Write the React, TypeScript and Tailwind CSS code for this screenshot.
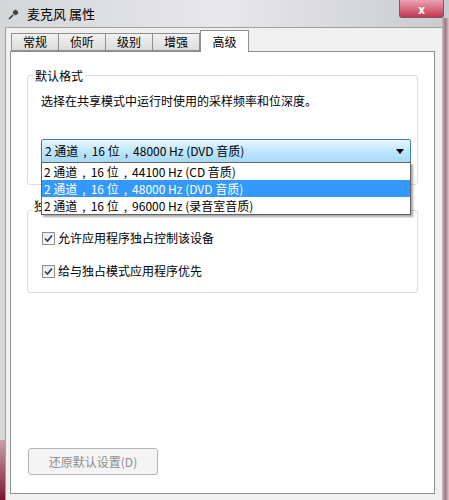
import React from "react";

const font = { fontFamily: '"Noto Sans CJK SC", "Noto Sans", sans-serif' };

function Tab({ label, active }: { label: string; active?: boolean }) {
  if (active) {
    return (
      <div className="relative z-10 -mb-px flex h-[22px] w-[49px] items-start justify-center border border-b-0 border-[#8e8f8f] bg-white pt-[2px] text-[12px] text-black">
        {label}
      </div>
    );
  }
  return (
    <div className="mt-[3px] flex h-[18px] items-center border border-r-0 border-[#8e8f8f] bg-gradient-to-b from-[#f2f2f2] to-[#dcdcdc] px-[11px] text-[12px] text-black">
      {label}
    </div>
  );
}

function Check({ label }: { label: string }) {
  return (
    <div className="flex items-center gap-[3px] text-[12px] text-black">
      <div className="flex h-[13px] w-[13px] items-center justify-center border border-[#8f8f8f] bg-gradient-to-br from-[#e8e8e8] to-white">
        <svg width="9" height="9" viewBox="0 0 9 9">
          <path d="M1 4.5 L3.5 7 L8 1.5" fill="none" stroke="#2a3a5c" strokeWidth="1.6" />
        </svg>
      </div>
      <span>{label}</span>
    </div>
  );
}

// renders "2 通道 , 16 位 , 48000 Hz (...)" with the wide comma spacing of the dialog
function Fmt({ text }: { text: string }) {
  const parts = text.split("，");
  return (
    <span>
      {parts.map((p, i) => (
        <React.Fragment key={i}>
          {i > 0 && <span className="px-[5px]">,</span>}
          {p}
        </React.Fragment>
      ))}
    </span>
  );
}

export default function App() {
  const options = [
    "2 通道，16 位，44100 Hz (CD 音质)",
    "2 通道，16 位，48000 Hz (DVD 音质)",
    "2 通道，16 位，96000 Hz (录音室音质)",
  ];
  return (
    <div
      className="relative h-[500px] w-[449px] overflow-hidden bg-gradient-to-r from-[#d4d6d8] via-[#e8e8ea] to-[#c9cbcf]"
      style={font}
    >
      <div className="absolute bottom-0 left-0 h-[60px] w-[5px] bg-gradient-to-b from-[#c8a0aa] to-[#7a1030]" />
      {/* title bar */}
      <div className="flex h-[27px] items-center gap-[6px] pl-[8px]">
        <svg width="13" height="12" viewBox="0 0 13 12">
          <path d="M1 11 L5 7" stroke="#333" strokeWidth="1.5" />
          <rect x="5" y="2" width="5" height="5" rx="2" fill="#444" transform="rotate(45 7.5 4.5)" />
        </svg>
        <span className="text-[13px] text-black">麦克风 属性</span>
      </div>
      <div className="absolute right-[5px] top-0 flex h-[18px] w-[45px] items-center justify-center rounded-b-[3px] border border-t-0 border-[#7a5a66] bg-gradient-to-b from-[#e9a2b4] to-[#c33355] text-[12px] font-bold text-white">
        x
      </div>
      <div className="absolute right-0 top-[18px] h-[482px] w-[7px] bg-gradient-to-r from-[#c9b6bb] via-[#9e7b86] to-[#d7c9cc]" />

      {/* client */}
      <div className="ml-[5px] h-[473px] w-[437px] border-l border-t border-[#a0a0a0] bg-[#f0f0f0] px-[4px] pt-[2px]">
        <div className="flex items-end pl-[1px]">
          <Tab label="常规" />
          <Tab label="侦听" />
          <Tab label="级别" />
          <div className="mt-[3px] flex h-[18px] items-center border border-[#8e8f8f] bg-gradient-to-b from-[#f2f2f2] to-[#dcdcdc] px-[11px] text-[12px] text-black">
            增强
          </div>
          <Tab label="高级" active />
        </div>
        <div className="flex h-[443px] w-[425px] flex-col border border-[#8e8f8f] bg-white px-[16px] pt-[23px]">
          {/* group 1 */}
          <div className="relative h-[110px] rounded-[3px] border border-[#dcdcdc] px-[13px] pt-[16px]">
            <span className="absolute -top-[9px] left-[5px] bg-white px-[2px] text-[12px] text-black">
              默认格式
            </span>
            <div className="text-[12px] text-black">选择在共享模式中运行时使用的采样频率和位深度。</div>
            <div className="relative mt-[29px] w-[370px]">
              <div className="flex h-[24px] items-center justify-between rounded-[2px] border border-[#3c7fb1] bg-gradient-to-b from-[#eaf6fd] via-[#bee6fd] to-[#a7d9f5] pl-[3px] pr-[6px] text-[12px] text-black">
                <Fmt text={options[1]} />
                <svg width="8" height="5" viewBox="0 0 8 5">
                  <path d="M0 0 H8 L4 5 Z" fill="#000" />
                </svg>
              </div>
              <div className="absolute left-0 top-[23px] z-20 w-[370px] border border-[#646464] bg-white shadow-[2px_2px_2px_rgba(0,0,0,0.35)]">
                {options.map((o, i) => (
                  <div
                    key={o}
                    className={
                      i === 1
                        ? "flex h-[17px] items-center bg-[#3399ff] pl-[2px] text-[12px] text-white"
                        : "flex h-[17px] items-center pl-[2px] text-[12px] text-black"
                    }
                  >
                    <Fmt text={o} />
                  </div>
                ))}
              </div>
            </div>
          </div>
          {/* group 2 */}
          <div className="relative mt-[25px] h-[83px] rounded-[3px] border border-[#dcdcdc] px-[14px] pt-[18px]">
            <span className="absolute -top-[11px] left-[4px] bg-white px-[2px] text-[12px] leading-[12px] text-black">
              独占模式
            </span>
            <div className="flex flex-col gap-[15px]">
              <Check label="允许应用程序独占控制该设备" />
              <Check label="给与独占模式应用程序优先" />
            </div>
          </div>
          <div className="flex-1" />
          <div className="mb-[18px] ml-[1px] flex h-[27px] w-[130px] items-center justify-center rounded-[3px] border border-[#b5b5b5] bg-[#f4f4f4] text-[12px] text-[#8d8d8d]">
            还原默认设置(D)
          </div>
        </div>
      </div>
    </div>
  );
}
